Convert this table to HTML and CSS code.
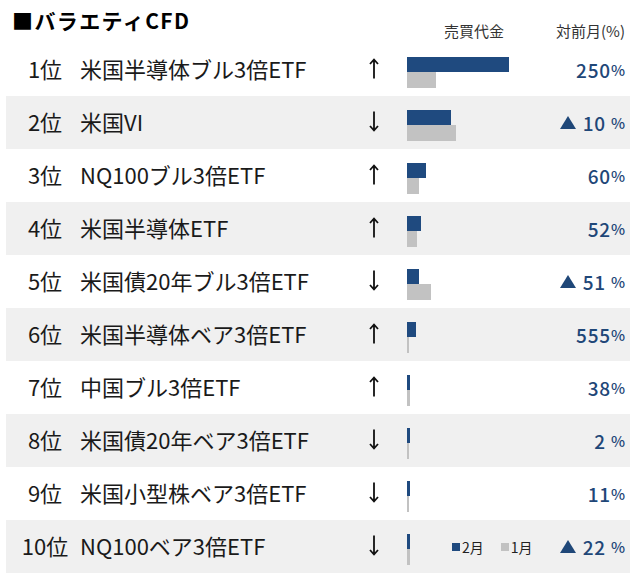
FILE: index.html
```html
<!DOCTYPE html>
<html lang="ja">
<head>
<meta charset="utf-8">
<title>バラエティCFD</title>
<link rel="stylesheet" href="styles.css">
</head>
<body>
<div class="page">
  <div class="top">
    <h1 class="title">■バラエティCFD</h1>
    <span class="label label-amount">売買代金</span>
    <span class="label label-mom">対前月(%)</span>
  </div>
  <div class="list">
    <div class="row">
      <span class="rank">1位</span><span class="name">米国半導体ブル3倍ETF</span>
      <span class="arrow"><svg width="10" height="21" viewBox="0 0 10 21"><path d="M5 1.5V20.5M1 6L5 1.5L9 6" fill="none" stroke="#111" stroke-width="1.8"/></svg></span>
      <div class="bars"><div class="barstack"><i class="bar cur" style="width:102px"></i><i class="bar prev" style="width:29px"></i></div></div>
      <span class="val">250<small>%</small></span>
    </div>
    <div class="row alt">
      <span class="rank">2位</span><span class="name">米国VI</span>
      <span class="arrow"><svg width="10" height="21" viewBox="0 0 10 21"><path d="M5 0.5V19.5M1 15L5 19.5L9 15" fill="none" stroke="#111" stroke-width="1.8"/></svg></span>
      <div class="bars"><div class="barstack"><i class="bar cur" style="width:44px"></i><i class="bar prev" style="width:49px"></i></div></div>
      <span class="val"><svg class="tri" width="16" height="13" viewBox="0 0 16 13"><polygon points="8,0 16,13 0,13"/></svg>10<small class="sp">%</small></span>
    </div>
    <div class="row">
      <span class="rank">3位</span><span class="name">NQ100ブル3倍ETF</span>
      <span class="arrow"><svg width="10" height="21" viewBox="0 0 10 21"><path d="M5 1.5V20.5M1 6L5 1.5L9 6" fill="none" stroke="#111" stroke-width="1.8"/></svg></span>
      <div class="bars"><div class="barstack"><i class="bar cur" style="width:19px"></i><i class="bar prev" style="width:12px"></i></div></div>
      <span class="val">60<small>%</small></span>
    </div>
    <div class="row alt">
      <span class="rank">4位</span><span class="name">米国半導体ETF</span>
      <span class="arrow"><svg width="10" height="21" viewBox="0 0 10 21"><path d="M5 1.5V20.5M1 6L5 1.5L9 6" fill="none" stroke="#111" stroke-width="1.8"/></svg></span>
      <div class="bars"><div class="barstack"><i class="bar cur" style="width:14px"></i><i class="bar prev" style="width:10px"></i></div></div>
      <span class="val">52<small>%</small></span>
    </div>
    <div class="row">
      <span class="rank">5位</span><span class="name">米国債20年ブル3倍ETF</span>
      <span class="arrow"><svg width="10" height="21" viewBox="0 0 10 21"><path d="M5 0.5V19.5M1 15L5 19.5L9 15" fill="none" stroke="#111" stroke-width="1.8"/></svg></span>
      <div class="bars"><div class="barstack"><i class="bar cur" style="width:12px"></i><i class="bar prev" style="width:24px"></i></div></div>
      <span class="val"><svg class="tri" width="16" height="13" viewBox="0 0 16 13"><polygon points="8,0 16,13 0,13"/></svg>51<small class="sp">%</small></span>
    </div>
    <div class="row alt">
      <span class="rank">6位</span><span class="name">米国半導体ベア3倍ETF</span>
      <span class="arrow"><svg width="10" height="21" viewBox="0 0 10 21"><path d="M5 1.5V20.5M1 6L5 1.5L9 6" fill="none" stroke="#111" stroke-width="1.8"/></svg></span>
      <div class="bars"><div class="barstack"><i class="bar cur" style="width:9px"></i><i class="bar prev" style="width:2px"></i></div></div>
      <span class="val">555<small>%</small></span>
    </div>
    <div class="row">
      <span class="rank">7位</span><span class="name">中国ブル3倍ETF</span>
      <span class="arrow"><svg width="10" height="21" viewBox="0 0 10 21"><path d="M5 1.5V20.5M1 6L5 1.5L9 6" fill="none" stroke="#111" stroke-width="1.8"/></svg></span>
      <div class="bars"><div class="barstack"><i class="bar cur" style="width:3px"></i><i class="bar prev" style="width:3px"></i></div></div>
      <span class="val">38<small>%</small></span>
    </div>
    <div class="row alt">
      <span class="rank">8位</span><span class="name">米国債20年ベア3倍ETF</span>
      <span class="arrow"><svg width="10" height="21" viewBox="0 0 10 21"><path d="M5 0.5V19.5M1 15L5 19.5L9 15" fill="none" stroke="#111" stroke-width="1.8"/></svg></span>
      <div class="bars"><div class="barstack"><i class="bar cur" style="width:3px"></i><i class="bar prev" style="width:2px"></i></div></div>
      <span class="val">2<small class="sp">%</small></span>
    </div>
    <div class="row">
      <span class="rank">9位</span><span class="name">米国小型株ベア3倍ETF</span>
      <span class="arrow"><svg width="10" height="21" viewBox="0 0 10 21"><path d="M5 0.5V19.5M1 15L5 19.5L9 15" fill="none" stroke="#111" stroke-width="1.8"/></svg></span>
      <div class="bars"><div class="barstack"><i class="bar cur" style="width:3px"></i><i class="bar prev" style="width:2px"></i></div></div>
      <span class="val">11<small>%</small></span>
    </div>
    <div class="row alt">
      <span class="rank">10位</span><span class="name">NQ100ベア3倍ETF</span>
      <span class="arrow"><svg width="10" height="21" viewBox="0 0 10 21"><path d="M5 0.5V19.5M1 15L5 19.5L9 15" fill="none" stroke="#111" stroke-width="1.8"/></svg></span>
      <div class="bars">
        <div class="barstack"><i class="bar cur" style="width:3px"></i><i class="bar prev" style="width:3px"></i></div>
        <div class="legend">
          <span class="key"><i class="sq cur"></i>2月</span>
          <span class="key"><i class="sq prev"></i>1月</span>
        </div>
      </div>
      <span class="val"><svg class="tri" width="16" height="13" viewBox="0 0 16 13"><polygon points="8,0 16,13 0,13"/></svg>22<small class="sp">%</small></span>
    </div>
  </div>
</div>
</body>
</html>
```

FILE: styles.css
```css
* { box-sizing: border-box; }
html, body {
  margin: 0;
  padding: 0;
  background: #fff;
}
body {
  font-family: "Noto Sans CJK JP", "Noto Sans", sans-serif;
  color: #1a1a1a;
}
.page {
  width: 640px;
  padding: 0 10px 0 6px;
}
.top {
  display: flex;
  align-items: flex-start;
  height: 43px;
  padding-right: 5px;
}
.title {
  flex: 1;
  margin: 0;
  padding: 6px 0 0 6px;
  font-size: 21px;
  line-height: 28px;
  font-weight: 700;
  color: #000;
  letter-spacing: 1.4px;
}
.label {
  margin-top: 21px;
  font-size: 15px;
  line-height: 20px;
  color: #333;
}
.label-amount {
  margin-right: 52px;
}
.list {
  display: flex;
  flex-direction: column;
}
.row {
  display: flex;
  align-items: center;
  height: 53px;
  padding: 0 5px 0 8px;
}
.row.alt {
  background: #f0f0f0;
}
.rank {
  width: 62px;
  text-align: center;
  font-size: 22px;
  line-height: 30px;
  margin-bottom: 3px;
}
.name {
  width: 292px;
  padding-left: 4px;
  font-size: 22px;
  line-height: 30px;
  white-space: nowrap;
  margin-bottom: 3px;
}
.arrow {
  width: 12px;
  display: flex;
  justify-content: center;
  margin-top: -2px;
}
.arrow svg { display: block; }
.bars {
  margin-left: 27px;
  display: flex;
  align-items: center;
  align-self: stretch;
}
.barstack {
  display: flex;
  flex-direction: column;
  margin-top: 6px;
}
.bar {
  display: block;
  height: 15px;
}
.bar.cur { background: #1f4a7f; }
.bar.prev { background: #c2c2c2; height: 16px; }
.legend {
  display: flex;
  align-items: center;
  margin-left: 42px;
  gap: 17px;
  font-size: 14px;
  line-height: 18px;
  color: #222;
  margin-top: 1px;
}
.key {
  display: flex;
  align-items: center;
  gap: 2px;
}
.sq {
  display: block;
  width: 8px;
  height: 8px;
}
.sq.cur { background: #1f4a7f; }
.sq.prev { background: #c2c2c2; }
.val {
  flex: 1;
  display: flex;
  align-items: center;
  justify-content: flex-end;
  font-size: 19px;
  line-height: 24px;
  font-weight: 500;
  color: #1f4778;
  letter-spacing: 0.8px;
}
.val small {
  font-size: 15px;
  font-weight: 500;
  letter-spacing: 0;
}
.val small.sp {
  margin-left: 5px;
}
.tri {
  display: block;
  margin-right: 7px;
  fill: #1f4778;
}
```
